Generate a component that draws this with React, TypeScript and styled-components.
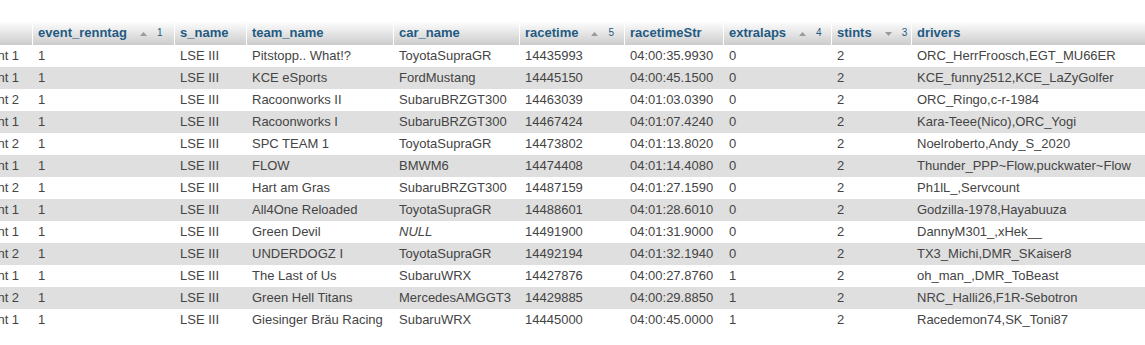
import React from "react";
import styled, { createGlobalStyle } from "styled-components";

const GlobalStyle = createGlobalStyle`
  html, body {
    margin: 0;
    padding: 0;
    background: #ffffff;
    overflow: hidden;
  }
  body {
    font-family: "Liberation Sans", Arial, sans-serif;
    font-size: 13px;
    color: #444444;
  }
`;

const Page = styled.div`
  width: 1145px;
  height: 345px;
  overflow: hidden;
  padding-top: 21px;
  box-sizing: border-box;
`;

const Table = styled.table`
  margin-left: -30px;
  border-collapse: separate;
  border-spacing: 0;
  table-layout: fixed;
  width: 1202px;
`;

const HeadCell = styled.th<{ $w: number }>`
  width: ${(p) => p.$w}px;
  box-sizing: border-box;
  height: 23.7px;
  padding: 0 4px 0 5px;
  text-align: left;
  vertical-align: middle;
  border-right: 1px solid #ffffff;
  background: linear-gradient(#ffffff, #cccccc);
  color: #235a81;
  font-weight: bold;
  font-size: 13px;
  white-space: nowrap;
`;

const HeadInner = styled.div`
  display: flex;
  align-items: center;
`;

const SortArrow = styled.svg`
  display: block;
  margin-left: 13px;
  margin-top: 3px;
  flex: none;
`;

const SortIndex = styled.span`
  margin-left: 10px;
  font-weight: normal;
  font-size: 10px;
  color: #235a81;
`;

const Row = styled.tr<{ $even: boolean }>`
  background: ${(p) => (p.$even ? "#dfdfdf" : "#ffffff")};
`;

const Cell = styled.td`
  height: 22px;
  box-sizing: border-box;
  padding: 0 4px 0 5px;
  vertical-align: middle;
  white-space: nowrap;
  overflow: hidden;
  color: #444444;
`;

const NullText = styled.i`
  font-style: italic;
`;

type Sort = { dir: "asc" | "desc"; idx: number };
type Col = { name: string; w: number; sort?: Sort };

const columns: Col[] = [
  { name: "", w: 63 },
  { name: "event_renntag", w: 142, sort: { dir: "asc", idx: 1 } },
  { name: "s_name", w: 72 },
  { name: "team_name", w: 147 },
  { name: "car_name", w: 126 },
  { name: "racetime", w: 105, sort: { dir: "asc", idx: 5 } },
  { name: "racetimeStr", w: 99 },
  { name: "extralaps", w: 108, sort: { dir: "asc", idx: 4 } },
  { name: "stints", w: 80, sort: { dir: "desc", idx: 3 } },
  { name: "drivers", w: 260 },
];

const rows: (string | null)[][] = [
  ["Event 1", "1", "LSE III", "Pitstopp.. What!?", "ToyotaSupraGR", "14435993", "04:00:35.9930", "0", "2", "ORC_HerrFroosch,EGT_MU66ER"],
  ["Event 1", "1", "LSE III", "KCE eSports", "FordMustang", "14445150", "04:00:45.1500", "0", "2", "KCE_funny2512,KCE_LaZyGolfer"],
  ["Event 2", "1", "LSE III", "Racoonworks II", "SubaruBRZGT300", "14463039", "04:01:03.0390", "0", "2", "ORC_Ringo,c-r-1984"],
  ["Event 1", "1", "LSE III", "Racoonworks I", "SubaruBRZGT300", "14467424", "04:01:07.4240", "0", "2", "Kara-Teee(Nico),ORC_Yogi"],
  ["Event 2", "1", "LSE III", "SPC TEAM 1", "ToyotaSupraGR", "14473802", "04:01:13.8020", "0", "2", "Noelroberto,Andy_S_2020"],
  ["Event 1", "1", "LSE III", "FLOW", "BMWM6", "14474408", "04:01:14.4080", "0", "2", "Thunder_PPP~Flow,puckwater~Flow"],
  ["Event 2", "1", "LSE III", "Hart am Gras", "SubaruBRZGT300", "14487159", "04:01:27.1590", "0", "2", "Ph1lL_,Servcount"],
  ["Event 1", "1", "LSE III", "All4One Reloaded", "ToyotaSupraGR", "14488601", "04:01:28.6010", "0", "2", "Godzilla-1978,Hayabuuza"],
  ["Event 1", "1", "LSE III", "Green Devil", null, "14491900", "04:01:31.9000", "0", "2", "DannyM301_,xHek__"],
  ["Event 2", "1", "LSE III", "UNDERDOGZ I", "ToyotaSupraGR", "14492194", "04:01:32.1940", "0", "2", "TX3_Michi,DMR_SKaiser8"],
  ["Event 1", "1", "LSE III", "The Last of Us", "SubaruWRX", "14427876", "04:00:27.8760", "1", "2", "oh_man_,DMR_ToBeast"],
  ["Event 2", "1", "LSE III", "Green Hell Titans", "MercedesAMGGT3", "14429885", "04:00:29.8850", "1", "2", "NRC_Halli26,F1R-Sebotron"],
  ["Event 1", "1", "LSE III", "Giesinger Bräu Racing", "SubaruWRX", "14445000", "04:00:45.0000", "1", "2", "Racedemon74,SK_Toni87"],
];

function SortMark({ sort }: { sort: Sort }) {
  const points = sort.dir === "asc" ? "3.5,0 7,4 0,4" : "0,0 7,0 3.5,4";
  return (
    <>
      <SortArrow width="7" height="4" viewBox="0 0 7 4">
        <polygon points={points} fill="#9a9a9a" />
      </SortArrow>
      <SortIndex>{sort.idx}</SortIndex>
    </>
  );
}

export default function App() {
  return (
    <>
      <GlobalStyle />
      <Page>
        <Table>
          <thead>
            <tr>
              {columns.map((c, i) => (
                <HeadCell key={i} $w={c.w}>
                  <HeadInner>
                    <span>{c.name}</span>
                    {c.sort && <SortMark sort={c.sort} />}
                  </HeadInner>
                </HeadCell>
              ))}
            </tr>
          </thead>
          <tbody>
            {rows.map((r, ri) => (
              <Row key={ri} $even={ri % 2 === 1}>
                {r.map((v, ci) => (
                  <Cell key={ci}>{v === null ? <NullText>NULL</NullText> : v}</Cell>
                ))}
              </Row>
            ))}
          </tbody>
        </Table>
      </Page>
    </>
  );
}
